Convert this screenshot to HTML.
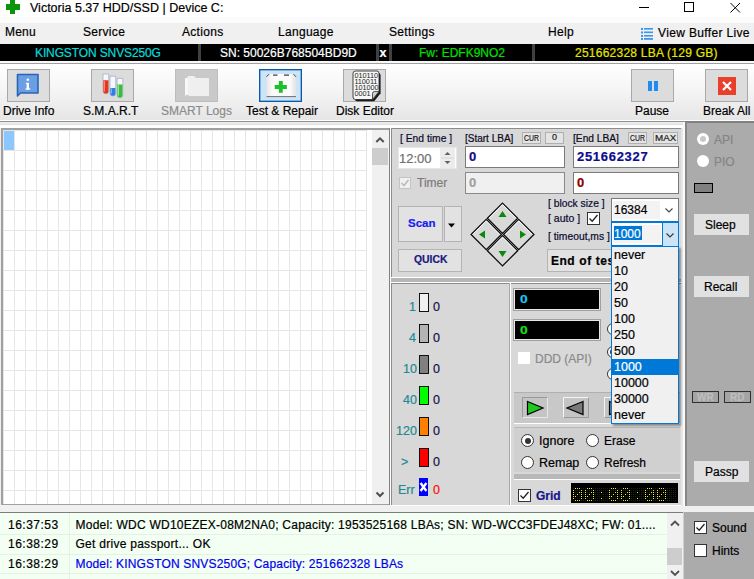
<!DOCTYPE html>
<html><head><meta charset="utf-8">
<style>
*{margin:0;padding:0;box-sizing:border-box}
html,body{width:754px;height:579px;overflow:hidden}
body{position:relative;background:#f0f0f0;font-family:"Liberation Sans",sans-serif;font-size:12px;color:#000}
.a{position:absolute}
.t{position:absolute;white-space:nowrap;line-height:12px;font-size:12px;-webkit-text-stroke:0.2px currentColor}
</style></head><body>

<!-- title bar -->
<div class="a" style="left:0;top:0;width:754px;height:22px;background:#fff"></div>
<div class="a" style="left:10px;top:0;width:5px;height:14px;background:#0a960a"></div>
<div class="a" style="left:6px;top:4px;width:14px;height:6px;background:#0a960a"></div>
<div class="t" style="left:30px;top:2px;font-size:12.5px;line-height:12.5px;color:#000">Victoria 5.37 HDD/SSD | Device C:</div>
<div class="a" style="left:639px;top:7px;width:10px;height:1px;background:#000"></div>
<div class="a" style="left:684px;top:2px;width:10px;height:10px;border:1px solid #000"></div>
<svg class="a" style="left:730px;top:2px" width="11" height="11"><path d="M0.5 1L10 10.5M10 1L0.5 10.5" stroke="#000" stroke-width="1"/></svg>

<!-- menu bar -->
<div class="a" style="left:0;top:17px;width:754px;height:6px;background:#fbfbfb"></div>
<div class="a" style="left:0;top:23px;width:754px;height:21px;background:#f0f0f0"></div>
<div class="t" style="left:5px;top:26px;letter-spacing:0.2px">Menu</div>
<div class="t" style="left:83px;top:26px;letter-spacing:0.3px">Service</div>
<div class="t" style="left:182px;top:26px;letter-spacing:0.3px">Actions</div>
<div class="t" style="left:278px;top:26px;letter-spacing:0.3px">Language</div>
<div class="t" style="left:389px;top:26px;letter-spacing:0.3px">Settings</div>
<div class="t" style="left:548px;top:26px;letter-spacing:0.3px">Help</div>
<svg class="a" style="left:640px;top:27px" width="14" height="14"><g fill="#3a96ee"><rect x="1" y="1" width="2" height="2"/><rect x="1" y="4.5" width="2" height="2"/><rect x="1" y="8" width="2" height="2"/><rect x="1" y="11" width="2" height="2"/><rect x="4" y="1" width="9" height="1.6"/><rect x="4" y="4.5" width="9" height="1.6"/><rect x="4" y="8" width="9" height="1.6"/><rect x="4" y="11" width="9" height="1.8"/></g></svg>
<div class="t" style="left:658px;top:27px;letter-spacing:0.35px">View Buffer Live</div>

<!-- drive bar -->
<div class="a" style="left:0;top:44px;width:754px;height:17px;background:#000"></div>
<div class="a" style="left:198px;top:44px;width:3px;height:17px;background:#404040"></div>
<div class="a" style="left:376px;top:44px;width:3px;height:17px;background:#404040"></div>
<div class="a" style="left:389px;top:44px;width:3px;height:17px;background:#404040"></div>
<div class="a" style="left:532px;top:44px;width:3px;height:17px;background:#404040"></div>
<div class="t" style="left:379.5px;top:47px;color:#fff;font-weight:bold;font-size:12.5px;line-height:12px">x</div>
<div class="t" style="left:35px;top:47px;color:#00dcdc;letter-spacing:-0.12px">KINGSTON SNVS250G</div>
<div class="t" style="left:220px;top:47px;color:#fff">SN: 50026B768504BD9D</div>
<div class="t" style="left:419px;top:47px;color:#00e000">Fw: EDFK9NO2</div>
<div class="t" style="left:575px;top:47px;color:#e6e600;letter-spacing:0.24px">251662328 LBA (129 GB)</div>

<!-- toolbar -->
<div class="a" style="left:0;top:61px;width:754px;height:2px;background:#f8f8f8"></div>
<div class="a" style="left:0;top:63px;width:754px;height:1px;background:#a0a0a0"></div>
<div class="a" style="left:0;top:64px;width:754px;height:56px;background:linear-gradient(#ffffff,#f4f4f4 50%,#e6e6e6)"></div>
<div class="a" style="left:0;top:120px;width:754px;height:1px;background:#fff"></div>
<div class="a" style="left:0;top:121px;width:754px;height:1px;background:#909090"></div>
<div class="a" style="left:0;top:122px;width:754px;height:2px;background:#ececec"></div>
<div class="a" style="left:0;top:124px;width:754px;height:1px;background:#e0e0e0"></div>
<div class="a" style="left:0;top:125px;width:754px;height:3px;background:#fff"></div>
<!-- buttons -->
<div class="a" style="left:7px;top:69px;width:43px;height:33px;background:#dedede;border:1px solid #a9a9a9"></div>
<svg class="a" style="left:16px;top:73px" width="24" height="25" viewBox="0 0 24 25">
<path d="M1.5 1.5H22V20H4.5L1.5 23Z" fill="#6b9fe4" stroke="#2c64b4" stroke-width="1.6" stroke-linejoin="round"/>
<rect x="10.6" y="9.8" width="2.4" height="6.4" fill="#fff"/><rect x="9.6" y="15.4" width="4.6" height="1.3" fill="#fff"/><rect x="9.8" y="9.8" width="1.2" height="1" fill="#fff"/>
<circle cx="11.8" cy="6.8" r="1.3" fill="#fff"/>
</svg>
<div class="a" style="left:91px;top:69px;width:43px;height:33px;background:#dcdcdc;border:1px solid #a9a9a9"></div>
<svg class="a" style="left:101px;top:73px" width="24" height="26" viewBox="0 0 24 26">
<path d="M2 1H7.7V18A2.85 2.85 0 0 1 2 18Z" fill="#f4f8ff" stroke="#a0a8b8" stroke-width="0.7"/>
<path d="M2.3 7.2H7.4V18A2.55 2.55 0 0 1 2.3 18Z" fill="#e8341e"/>
<path d="M3.4 8V18.5" stroke="#f6a090" stroke-width="0.9"/>
<path d="M9 3.2H14.7V20.2A2.85 2.85 0 0 1 9 20.2Z" fill="#f4f8ff" stroke="#a0a8b8" stroke-width="0.7"/>
<path d="M9.3 14.9H14.4V20.2A2.55 2.55 0 0 1 9.3 20.2Z" fill="#2a80e4"/>
<path d="M10.4 15.5V20.5" stroke="#90c0f4" stroke-width="0.9"/>
<path d="M16.1 5.4H21.8V22A2.85 2.85 0 0 1 16.1 22Z" fill="#f4f8ff" stroke="#a0a8b8" stroke-width="0.7"/>
<path d="M16.4 11.6H21.5V22A2.55 2.55 0 0 1 16.4 22Z" fill="#34c03c"/>
<path d="M17.5 12.2V22.5" stroke="#a0e8a4" stroke-width="0.9"/>
</svg>
<div class="a" style="left:175px;top:69px;width:43px;height:33px;background:#c9c9c9;border:1px solid #bdbdbd"></div>
<svg class="a" style="left:184px;top:75px" width="26" height="22" viewBox="0 0 26 22">
<path d="M4 1H10L12 3H25V21H5L3 19V3Z" fill="#efefef"/>
<path d="M1 3H4V19L1 21Z" fill="#f7f7f7"/>
</svg>
<div class="a" style="left:259px;top:69px;width:43px;height:33px;background:#cce4f7;border:1px solid #0a58a8;box-shadow:inset 0 0 0 0.5px #3a80c8"></div>
<svg class="a" style="left:262px;top:70px" width="38" height="30" viewBox="0 0 38 30">
<defs><linearGradient id="fa" x1="0" x2="1"><stop offset="0" stop-color="#e6e6e6"/><stop offset="0.2" stop-color="#fbfbfb"/><stop offset="0.8" stop-color="#fbfbfb"/><stop offset="1" stop-color="#e2e2e2"/></linearGradient></defs>
<path d="M4.5 6.5L7 4H31.5L34 6.5V27H4.5Z" fill="url(#fa)"/>
<path d="M4.5 6.8L7 4.2M31.5 4.2L34 6.8" stroke="#404040" stroke-width="1"/>
<path d="M11 5.2H15.5M22 5.2H27" stroke="#404040" stroke-width="1.3"/>
<path d="M4.5 26.6H34" stroke="#707070" stroke-width="1"/>
<path d="M18.8 11V22.8M12.7 17H24.9" stroke="#1cc02a" stroke-width="3.9"/>
</svg>
<div class="a" style="left:343px;top:69px;width:43px;height:33px;background:#dcdcdc;border:1px solid #a9a9a9"></div>
<svg class="a" style="left:351px;top:70px" width="32" height="32" viewBox="0 0 32 32">
<path d="M4 5Q4 3 6 3H27Q29.6 3 29.6 5.5V23.2L23.2 31.2H6Q4 31.2 4 29Z" fill="#1a1a1a"/>
<path d="M2 3.5Q2 1 4.5 1H26Q28 1 28 3.5V21.5L21.5 29.5H4.5Q2 29.5 2 27Z" fill="#f6f6f6" stroke="#303030" stroke-width="0.9"/>
<path d="M28 21.5L21.5 29.5V23.5Q21.5 21.5 23.5 21.5Z" fill="#d0d0d0" stroke="#303030" stroke-width="0.8"/>
<g font-family="Liberation Sans" font-size="7.3" fill="#1e1e1e" letter-spacing="-0.05">
<text x="3.4" y="7.6">010110</text>
<text x="3.4" y="13.8">110011</text>
<text x="3.4" y="20">101000</text>
<text x="3.4" y="26.2">0001</text>
</g>
</svg>
<div class="a" style="left:631px;top:69px;width:43px;height:33px;background:#dcdcdc;border:1px solid #a9a9a9"></div>
<div class="a" style="left:648px;top:81px;width:4px;height:10px;background:#1e8cf0"></div>
<div class="a" style="left:654px;top:81px;width:4px;height:10px;background:#1e8cf0"></div>
<div class="a" style="left:705px;top:69px;width:43px;height:33px;background:#dcdcdc;border:1px solid #a9a9a9"></div>
<div class="a" style="left:718px;top:77px;width:18px;height:18px;background:#e8402a"></div>
<svg class="a" style="left:718px;top:77px" width="18" height="18"><path d="M5 5L13 13M13 5L5 13" stroke="#fff" stroke-width="2.2"/></svg>
<div class="t" style="left:3px;top:105px">Drive Info</div>
<div class="t" style="left:83px;top:105px">S.M.A.R.T</div>
<div class="t" style="left:161px;top:105px;color:#8c8c8c">SMART Logs</div>
<div class="t" style="left:246px;top:105px">Test &amp; Repair</div>
<div class="t" style="left:336px;top:105px">Disk Editor</div>
<div class="t" style="left:635px;top:105px">Pause</div>
<div class="t" style="left:703px;top:105px">Break All</div>

<!-- grid area -->
<div class="a" style="left:1px;top:128px;width:389px;height:377px;background:#a0a0a0"></div>
<div class="a" style="left:3px;top:130px;width:386px;height:374px;background-color:#fff;background-image:linear-gradient(90deg,#e6e6e6 1px,transparent 1px),linear-gradient(#e6e6e6 1px,transparent 1px);background-size:11px 20px,11px 20px;background-position:11px 0,0 20px"></div>
<div class="a" style="left:4px;top:131px;width:10px;height:19px;background:#8cc8ff"></div>
<div class="a" style="left:367px;top:130px;width:5px;height:374px;background:#fff"></div>
<div class="a" style="left:372px;top:130px;width:17px;height:374px;background:#f0f0f0"></div>
<div class="a" style="left:372px;top:148px;width:16px;height:17px;background:#cdcdcd"></div>
<svg class="a" style="left:372px;top:131px" width="17" height="17"><path d="M4.3 11L8 7.3L11.7 11" fill="none" stroke="#505050" stroke-width="2"/></svg>
<svg class="a" style="left:372px;top:486px" width="17" height="17"><path d="M4.5 6.5L8 10L11.5 6.5" fill="none" stroke="#505050" stroke-width="2"/></svg>
<div class="a" style="left:389px;top:128px;width:1px;height:377px;background:#808080"></div>

<!-- top panel -->
<div class="a" style="left:390px;top:128px;width:1px;height:377px;background:#fff"></div>
<div class="a" style="left:391px;top:128px;width:290px;height:149px;background:#d8d8d8;border-left:1px solid #8c8c8c;border-top:1px solid #8c8c8c"></div>
<div class="a" style="left:681px;top:128px;width:2px;height:378px;background:#e6e6e6"></div>
<div class="a" style="left:683px;top:122px;width:2px;height:384px;background:#fafafa"></div>
<div class="a" style="left:685px;top:121px;width:2px;height:385px;background:#868686"></div>
<div class="a" style="left:391px;top:277px;width:290px;height:1px;background:#fff"></div>
<div class="a" style="left:391px;top:278px;width:290px;height:4px;background:#b6b6b6"></div>
<div class="a" style="left:391px;top:282px;width:290px;height:1px;background:#fff"></div>

<div class="t" style="left:400px;top:134px;font-size:10.3px;line-height:10px;color:#0a0a30">[ End time ]</div>
<div class="t" style="left:465px;top:134px;font-size:10px;line-height:10px;color:#0a0a20">[Start LBA]</div>
<div class="a" style="left:522px;top:132px;width:19px;height:12px;background:#e4e4e4;border:1px solid #b0b0b0"></div>
<div class="t" style="left:524px;top:134px;font-size:8.4px;line-height:8px;color:#202020;transform:scaleX(0.82);transform-origin:0 0">CUR</div>
<div class="a" style="left:545px;top:132px;width:19px;height:12px;background:#e4e4e4;border:1px solid #b0b0b0"></div>
<div class="t" style="left:552px;top:133px;font-size:9px;line-height:9px;color:#202020">0</div>
<div class="t" style="left:573px;top:134px;font-size:10.2px;line-height:10px;color:#0a0a20">[End LBA]</div>
<div class="a" style="left:628px;top:132px;width:19px;height:12px;background:#e4e4e4;border:1px solid #b0b0b0"></div>
<div class="t" style="left:630px;top:134px;font-size:8.4px;line-height:8px;color:#202020;transform:scaleX(0.82);transform-origin:0 0">CUR</div>
<div class="a" style="left:653px;top:132px;width:25px;height:12px;background:#e4e4e4;border:1px solid #b0b0b0"></div>
<div class="t" style="left:655px;top:133px;font-size:9.8px;line-height:9px;color:#202020">MAX</div>

<div class="a" style="left:398px;top:147px;width:59px;height:22px;background:#fff;border:1px solid #e6e6e6"></div>
<div class="t" style="left:399px;top:152px;font-size:13px;line-height:13px;color:#707070">12:00</div>
<div class="a" style="left:440px;top:148px;width:15px;height:20px;background:#ececec"></div>
<svg class="a" style="left:440px;top:148px" width="15" height="20"><path d="M4.5 7L7.5 4L10.5 7Z" fill="#606060"/><path d="M4.5 13L7.5 16L10.5 13Z" fill="#606060"/><path d="M1 10H14" stroke="#d4d4d4"/></svg>
<div class="a" style="left:399px;top:177px;width:12px;height:12px;background:#f0f0f0;border:1px solid #c4c4c4"></div>
<svg class="a" style="left:399px;top:177px" width="12" height="12"><path d="M2.5 6L5 8.5L9.5 3" fill="none" stroke="#b4b4b4" stroke-width="1.3"/></svg>
<div class="t" style="left:417px;top:177px;color:#7c7c7c">Timer</div>

<div class="a" style="left:465px;top:146px;width:100px;height:22px;background:#fff;border:1px solid #7a7a7a"></div>
<div class="t" style="left:469px;top:150px;font-size:13px;line-height:13px;font-weight:bold;color:#0c0c8c">0</div>
<div class="a" style="left:465px;top:172px;width:100px;height:22px;background:#f0f0f0;border:1px solid #8a8a8a"></div>
<div class="t" style="left:469px;top:176px;font-size:13px;line-height:13px;font-weight:bold;color:#a0a0a0">0</div>
<div class="a" style="left:573px;top:146px;width:106px;height:22px;background:#fff;border:1px solid #7a7a7a"></div>
<div class="t" style="left:577px;top:150px;font-size:13px;line-height:13px;font-weight:bold;color:#0c0c8c;letter-spacing:0.7px">251662327</div>
<div class="a" style="left:573px;top:172px;width:106px;height:22px;background:#fff;border:1px solid #7a7a7a"></div>
<div class="t" style="left:577px;top:176px;font-size:13px;line-height:13px;font-weight:bold;color:#8c0000">0</div>

<div class="a" style="left:398px;top:206px;width:45px;height:36px;background:#e2e2e2;border:1px solid #b4b4b4"></div>
<div class="t" style="left:408px;top:218px;font-size:11.5px;line-height:11px;font-weight:bold;color:#1c1cf0">Scan</div>
<div class="a" style="left:444px;top:206px;width:18px;height:36px;background:#e2e2e2;border:1px solid #b4b4b4"></div>
<svg class="a" style="left:444px;top:206px" width="18" height="36"><path d="M4 17.5H11L7.5 21.5Z" fill="#000"/></svg>
<div class="a" style="left:398px;top:249px;width:64px;height:23px;background:#e2e2e2;border:1px solid #b4b4b4"></div>
<div class="t" style="left:414px;top:255px;font-size:10.4px;line-height:10px;font-weight:bold;color:#1a1a80">QUICK</div>

<svg class="a" style="left:468px;top:200px" width="70" height="70" viewBox="0 0 70 70">
<g stroke="#0c0c0c" stroke-width="1.3" fill="#d9d9d9"><path d="M34.50 3.10L49.65 18.25L34.50 33.40L19.35 18.25Z"/><path d="M18.25 19.35L33.40 34.50L18.25 49.65L3.10 34.50Z"/><path d="M50.75 19.35L65.90 34.50L50.75 49.65L35.60 34.50Z"/><path d="M34.50 35.60L49.65 50.75L34.50 65.90L19.35 50.75Z"/></g>
<g stroke="#fafafa" stroke-width="1" fill="none"><path d="M20.95 18.25L34.50 4.70L48.05 18.25" /><path d="M4.70 34.50L18.25 20.95L31.80 34.50" /><path d="M37.20 34.50L50.75 20.95L64.30 34.50" /><path d="M20.95 50.75L34.50 37.20L48.05 50.75" /></g>
<path d="M30.5 17L34.5 11L38.5 17Z" fill="#0a8a0a"/>
<path d="M30.5 51L34.5 57L38.5 51Z" fill="#0a8a0a"/>
<path d="M17 30.5L11 34.5L17 38.5Z" fill="#0a8a0a"/>
<path d="M52 30.5L58 34.5L52 38.5Z" fill="#0a8a0a"/>
</svg>

<div class="t" style="left:548px;top:199px;font-size:10.3px;line-height:10px;color:#0a0a30">[ block size ]</div>
<div class="t" style="left:548px;top:213px;font-size:10.5px;line-height:10px;color:#0a0a30">[ auto ]</div>
<div class="a" style="left:587px;top:212px;width:13px;height:13px;background:#fff;border:1px solid #333"></div>
<svg class="a" style="left:587px;top:212px" width="13" height="13"><path d="M2.5 6.5L5.2 9.2L10.5 3" fill="none" stroke="#222" stroke-width="1.3"/></svg>
<div class="t" style="left:548px;top:232px;font-size:10.3px;line-height:10px;color:#0a0a30">[ timeout,ms ]</div>

<div class="a" style="left:547px;top:249px;width:80px;height:23px;background:#e2e2e2;border:1px solid #b4b4b4"></div>
<div class="t" style="left:551px;top:255px;font-size:12px;line-height:12px;font-weight:bold;color:#000;letter-spacing:0.5px;word-spacing:0.3px">End of test</div>

<div class="a" style="left:611px;top:198px;width:68px;height:24px;background:#fff;border:1px solid #7a7a7a"></div>
<div class="a" style="left:613px;top:201px;width:47px;height:18px;background:#f3f3f3"></div>
<div class="t" style="left:614px;top:204px;color:#000">16384</div>
<svg class="a" style="left:662px;top:204px" width="14" height="12"><path d="M3.5 4.5L7 8L10.5 4.5" fill="none" stroke="#444" stroke-width="1.1"/></svg>

<div class="a" style="left:611px;top:221px;width:68px;height:26px;background:#fff;border:1px solid #0078d7;border-top-width:2px;border-bottom-width:2px"></div>
<div class="a" style="left:662px;top:223px;width:16px;height:23px;background:#cce4f7;border-left:1px solid #0078d7"></div>
<svg class="a" style="left:663px;top:229px" width="14" height="12"><path d="M3.5 4.5L7 8L10.5 4.5" fill="none" stroke="#333" stroke-width="1.1"/></svg>
<div class="a" style="left:613px;top:225px;width:48px;height:18px;background:#f3f3f3"></div>
<div class="a" style="left:614px;top:226px;width:28px;height:14px;background:#0078d7"></div>
<div class="t" style="left:614px;top:228px;color:#fff">1000</div>

<!-- lower left stats panel -->
<div class="a" style="left:391px;top:283px;width:119px;height:222px;background:#d8d8d8;border-left:1px solid #8c8c8c;border-top:1px solid #8c8c8c"></div>
<div class="a" style="left:509px;top:283px;width:1px;height:222px;background:#a8a8a8"></div>
<div class="a" style="left:510px;top:283px;width:1px;height:222px;background:#fff"></div>
<div class="t" style="left:409px;top:301px;font-size:12.5px;line-height:12px;color:#1d8a96">1</div>
<div class="t" style="left:409px;top:332px;font-size:12.5px;line-height:12px;color:#1d8a96">4</div>
<div class="t" style="left:403px;top:363px;font-size:12.5px;line-height:12px;color:#1d8a96">10</div>
<div class="t" style="left:403px;top:394px;font-size:12.5px;line-height:12px;color:#1d8a96">40</div>
<div class="t" style="left:396px;top:425px;font-size:12.5px;line-height:12px;color:#1d8a96">120</div>
<div class="t" style="left:401px;top:456px;font-size:12.5px;line-height:12px;color:#1d8a96">&gt;</div>
<div class="t" style="left:398px;top:484px;font-size:12.5px;line-height:12px;color:#1d8a96">Err</div>
<div class="a" style="left:419px;top:293px;width:10px;height:19px;background:#f0f0f0;border:1.5px solid #111"></div>
<div class="a" style="left:419px;top:324px;width:10px;height:19px;background:#b4b4b4;border:1.5px solid #111"></div>
<div class="a" style="left:419px;top:355px;width:10px;height:19px;background:#808080;border:1.5px solid #111"></div>
<div class="a" style="left:419px;top:386px;width:10px;height:19px;background:#00ff00;border:1.5px solid #111"></div>
<div class="a" style="left:419px;top:417px;width:10px;height:19px;background:#ff8000;border:1.5px solid #111"></div>
<div class="a" style="left:419px;top:448px;width:10px;height:19px;background:#ff0000;border:1.5px solid #111"></div>
<div class="a" style="left:419px;top:478px;width:9px;height:18px;background:#0000ff"></div>
<svg class="a" style="left:419px;top:478px" width="9" height="18"><path d="M1.6 5L7.4 13M7.4 5L1.6 13" stroke="#fff" stroke-width="2.3"/></svg>
<div class="t" style="left:433px;top:301px;font-size:12.5px;line-height:12px;color:#14144a">0</div>
<div class="t" style="left:433px;top:332px;font-size:12.5px;line-height:12px;color:#14144a">0</div>
<div class="t" style="left:433px;top:363px;font-size:12.5px;line-height:12px;color:#14144a">0</div>
<div class="t" style="left:433px;top:394px;font-size:12.5px;line-height:12px;color:#14144a">0</div>
<div class="t" style="left:433px;top:425px;font-size:12.5px;line-height:12px;color:#14144a">0</div>
<div class="t" style="left:433px;top:456px;font-size:12.5px;line-height:12px;color:#14144a">0</div>
<div class="t" style="left:433px;top:484px;font-size:12.5px;line-height:12px;color:#ff1010">0</div>

<!-- lower right panel -->
<div class="a" style="left:511px;top:283px;width:170px;height:222px;background:#d8d8d8;border-top:1px solid #8c8c8c"></div>
<div class="a" style="left:514px;top:289px;width:86px;height:21px;background:#000;border:1px solid #e8e8e8;outline:1px solid #a0a0a0"></div>
<div class="t" style="left:520px;top:294px;font-size:11px;line-height:11px;font-weight:bold;color:#18c8f4;transform:scaleX(1.25);transform-origin:0 0">0</div>
<div class="a" style="left:514px;top:320px;width:86px;height:20px;background:#000;border:1px solid #e8e8e8;outline:1px solid #a0a0a0"></div>
<div class="t" style="left:520px;top:325px;font-size:11px;line-height:11px;font-weight:bold;color:#18e018;transform:scaleX(1.25);transform-origin:0 0">0</div>
<div class="a" style="left:518px;top:352px;width:12px;height:12px;background:#fff"></div>
<div class="t" style="left:535px;top:353px;color:#8a8a8a">DDD (API)</div>
<div class="a" style="left:607px;top:323px;width:12px;height:12px;border-radius:50%;background:#fff;border:1px solid #333"></div>
<div class="a" style="left:607px;top:346px;width:12px;height:12px;border-radius:50%;background:#fff;border:1px solid #333"></div>
<div class="a" style="left:610px;top:349px;width:6px;height:6px;border-radius:50%;background:#333"></div>
<div class="a" style="left:607px;top:368px;width:12px;height:12px;border-radius:50%;background:#fff;border:1px solid #333"></div>

<div class="a" style="left:514px;top:392px;width:166px;height:31px;background:#c8c8c8;border-top:1px solid #b0b0b0"></div>
<div class="a" style="left:514px;top:423px;width:166px;height:1px;background:#fff"></div>
<div class="a" style="left:522px;top:397px;width:26px;height:21px;background:#c4c4c4;border:1px solid #e8e8e8;border-top-color:#9a9a9a;border-left-color:#9a9a9a"></div>
<svg class="a" style="left:522px;top:397px" width="26" height="21"><path d="M5.5 4.5L21 11L5.5 17.5Z" fill="#22c822" stroke="#000" stroke-width="1.2"/></svg>
<div class="a" style="left:563px;top:397px;width:26px;height:21px;background:#c4c4c4;border:1px solid #9a9a9a;border-top-color:#f4f4f4;border-left-color:#f4f4f4"></div>
<svg class="a" style="left:563px;top:397px" width="26" height="21"><path d="M20 4.5L4 11L20 17.5Z" fill="#7a7a7a" stroke="#000" stroke-width="1.2"/></svg>
<div class="a" style="left:604px;top:397px;width:26px;height:21px;background:#c4c4c4;border:1px solid #9a9a9a;border-top-color:#f4f4f4;border-left-color:#f4f4f4"></div>
<svg class="a" style="left:604px;top:397px" width="26" height="21"><path d="M5.5 4.5L21 11L5.5 17.5Z" fill="#7a7a7a" stroke="#000" stroke-width="1.2"/></svg>

<div class="a" style="left:514px;top:427px;width:166px;height:45px;background:#d0d0d0;border-top:1px solid #b8b8b8"></div>
<div class="a" style="left:521px;top:434px;width:13px;height:13px;border-radius:50%;background:#fff;border:1.3px solid #333"></div>
<div class="a" style="left:524.5px;top:437.5px;width:6px;height:6px;border-radius:50%;background:#333"></div>
<div class="t" style="left:539px;top:435px;font-size:12.5px;line-height:12px">Ignore</div>
<div class="a" style="left:586px;top:434px;width:13px;height:13px;border-radius:50%;background:#fff;border:1px solid #333"></div>
<div class="t" style="left:604px;top:435px">Erase</div>
<div class="a" style="left:521px;top:456px;width:13px;height:13px;border-radius:50%;background:#fff;border:1px solid #333"></div>
<div class="t" style="left:539px;top:457px;font-size:12.5px;line-height:12px">Remap</div>
<div class="a" style="left:586px;top:456px;width:13px;height:13px;border-radius:50%;background:#fff;border:1px solid #333"></div>
<div class="t" style="left:604px;top:457px">Refresh</div>
<div class="a" style="left:514px;top:474px;width:166px;height:5px;background:#b8b8b8"></div>
<div class="a" style="left:514px;top:479px;width:166px;height:1px;background:#fff"></div>

<div class="a" style="left:518px;top:489px;width:13px;height:13px;background:#fff;border:1px solid #333"></div>
<svg class="a" style="left:518px;top:489px" width="13" height="13"><path d="M2.5 6.5L5.2 9.2L10.5 3" fill="none" stroke="#222" stroke-width="1.3"/></svg>
<div class="t" style="left:536px;top:490px;font-weight:bold;color:#14148c">Grid</div>
<svg class="a" style="left:571px;top:483px" width="107" height="20"><rect width="107" height="20" fill="#000"/><g fill="#1a2a10" opacity="0.9"><rect x="2" y="5" width="1" height="1"/><rect x="2" y="7" width="1" height="1"/><rect x="2" y="9" width="1" height="1"/><rect x="2" y="11" width="1" height="1"/><rect x="2" y="13" width="1" height="1"/><rect x="2" y="15" width="1" height="1"/><rect x="2" y="17" width="1" height="1"/><rect x="4" y="5" width="1" height="1"/><rect x="4" y="7" width="1" height="1"/><rect x="4" y="9" width="1" height="1"/><rect x="4" y="11" width="1" height="1"/><rect x="4" y="13" width="1" height="1"/><rect x="4" y="15" width="1" height="1"/><rect x="4" y="17" width="1" height="1"/><rect x="6" y="5" width="1" height="1"/><rect x="6" y="7" width="1" height="1"/><rect x="6" y="9" width="1" height="1"/><rect x="6" y="11" width="1" height="1"/><rect x="6" y="13" width="1" height="1"/><rect x="6" y="15" width="1" height="1"/><rect x="6" y="17" width="1" height="1"/><rect x="8" y="5" width="1" height="1"/><rect x="8" y="7" width="1" height="1"/><rect x="8" y="9" width="1" height="1"/><rect x="8" y="11" width="1" height="1"/><rect x="8" y="13" width="1" height="1"/><rect x="8" y="15" width="1" height="1"/><rect x="8" y="17" width="1" height="1"/><rect x="10" y="5" width="1" height="1"/><rect x="10" y="7" width="1" height="1"/><rect x="10" y="9" width="1" height="1"/><rect x="10" y="11" width="1" height="1"/><rect x="10" y="13" width="1" height="1"/><rect x="10" y="15" width="1" height="1"/><rect x="10" y="17" width="1" height="1"/><rect x="12" y="5" width="1" height="1"/><rect x="12" y="7" width="1" height="1"/><rect x="12" y="9" width="1" height="1"/><rect x="12" y="11" width="1" height="1"/><rect x="12" y="13" width="1" height="1"/><rect x="12" y="15" width="1" height="1"/><rect x="12" y="17" width="1" height="1"/><rect x="14" y="5" width="1" height="1"/><rect x="14" y="7" width="1" height="1"/><rect x="14" y="9" width="1" height="1"/><rect x="14" y="11" width="1" height="1"/><rect x="14" y="13" width="1" height="1"/><rect x="14" y="15" width="1" height="1"/><rect x="14" y="17" width="1" height="1"/><rect x="16" y="5" width="1" height="1"/><rect x="16" y="7" width="1" height="1"/><rect x="16" y="9" width="1" height="1"/><rect x="16" y="11" width="1" height="1"/><rect x="16" y="13" width="1" height="1"/><rect x="16" y="15" width="1" height="1"/><rect x="16" y="17" width="1" height="1"/><rect x="18" y="5" width="1" height="1"/><rect x="18" y="7" width="1" height="1"/><rect x="18" y="9" width="1" height="1"/><rect x="18" y="11" width="1" height="1"/><rect x="18" y="13" width="1" height="1"/><rect x="18" y="15" width="1" height="1"/><rect x="18" y="17" width="1" height="1"/><rect x="20" y="5" width="1" height="1"/><rect x="20" y="7" width="1" height="1"/><rect x="20" y="9" width="1" height="1"/><rect x="20" y="11" width="1" height="1"/><rect x="20" y="13" width="1" height="1"/><rect x="20" y="15" width="1" height="1"/><rect x="20" y="17" width="1" height="1"/><rect x="22" y="5" width="1" height="1"/><rect x="22" y="7" width="1" height="1"/><rect x="22" y="9" width="1" height="1"/><rect x="22" y="11" width="1" height="1"/><rect x="22" y="13" width="1" height="1"/><rect x="22" y="15" width="1" height="1"/><rect x="22" y="17" width="1" height="1"/><rect x="24" y="5" width="1" height="1"/><rect x="24" y="7" width="1" height="1"/><rect x="24" y="9" width="1" height="1"/><rect x="24" y="11" width="1" height="1"/><rect x="24" y="13" width="1" height="1"/><rect x="24" y="15" width="1" height="1"/><rect x="24" y="17" width="1" height="1"/><rect x="26" y="5" width="1" height="1"/><rect x="26" y="7" width="1" height="1"/><rect x="26" y="9" width="1" height="1"/><rect x="26" y="11" width="1" height="1"/><rect x="26" y="13" width="1" height="1"/><rect x="26" y="15" width="1" height="1"/><rect x="26" y="17" width="1" height="1"/><rect x="28" y="5" width="1" height="1"/><rect x="28" y="7" width="1" height="1"/><rect x="28" y="9" width="1" height="1"/><rect x="28" y="11" width="1" height="1"/><rect x="28" y="13" width="1" height="1"/><rect x="28" y="15" width="1" height="1"/><rect x="28" y="17" width="1" height="1"/><rect x="30" y="5" width="1" height="1"/><rect x="30" y="7" width="1" height="1"/><rect x="30" y="9" width="1" height="1"/><rect x="30" y="11" width="1" height="1"/><rect x="30" y="13" width="1" height="1"/><rect x="30" y="15" width="1" height="1"/><rect x="30" y="17" width="1" height="1"/><rect x="32" y="5" width="1" height="1"/><rect x="32" y="7" width="1" height="1"/><rect x="32" y="9" width="1" height="1"/><rect x="32" y="11" width="1" height="1"/><rect x="32" y="13" width="1" height="1"/><rect x="32" y="15" width="1" height="1"/><rect x="32" y="17" width="1" height="1"/><rect x="34" y="5" width="1" height="1"/><rect x="34" y="7" width="1" height="1"/><rect x="34" y="9" width="1" height="1"/><rect x="34" y="11" width="1" height="1"/><rect x="34" y="13" width="1" height="1"/><rect x="34" y="15" width="1" height="1"/><rect x="34" y="17" width="1" height="1"/><rect x="36" y="5" width="1" height="1"/><rect x="36" y="7" width="1" height="1"/><rect x="36" y="9" width="1" height="1"/><rect x="36" y="11" width="1" height="1"/><rect x="36" y="13" width="1" height="1"/><rect x="36" y="15" width="1" height="1"/><rect x="36" y="17" width="1" height="1"/><rect x="38" y="5" width="1" height="1"/><rect x="38" y="7" width="1" height="1"/><rect x="38" y="9" width="1" height="1"/><rect x="38" y="11" width="1" height="1"/><rect x="38" y="13" width="1" height="1"/><rect x="38" y="15" width="1" height="1"/><rect x="38" y="17" width="1" height="1"/><rect x="40" y="5" width="1" height="1"/><rect x="40" y="7" width="1" height="1"/><rect x="40" y="9" width="1" height="1"/><rect x="40" y="11" width="1" height="1"/><rect x="40" y="13" width="1" height="1"/><rect x="40" y="15" width="1" height="1"/><rect x="40" y="17" width="1" height="1"/><rect x="42" y="5" width="1" height="1"/><rect x="42" y="7" width="1" height="1"/><rect x="42" y="9" width="1" height="1"/><rect x="42" y="11" width="1" height="1"/><rect x="42" y="13" width="1" height="1"/><rect x="42" y="15" width="1" height="1"/><rect x="42" y="17" width="1" height="1"/><rect x="44" y="5" width="1" height="1"/><rect x="44" y="7" width="1" height="1"/><rect x="44" y="9" width="1" height="1"/><rect x="44" y="11" width="1" height="1"/><rect x="44" y="13" width="1" height="1"/><rect x="44" y="15" width="1" height="1"/><rect x="44" y="17" width="1" height="1"/><rect x="46" y="5" width="1" height="1"/><rect x="46" y="7" width="1" height="1"/><rect x="46" y="9" width="1" height="1"/><rect x="46" y="11" width="1" height="1"/><rect x="46" y="13" width="1" height="1"/><rect x="46" y="15" width="1" height="1"/><rect x="46" y="17" width="1" height="1"/><rect x="48" y="5" width="1" height="1"/><rect x="48" y="7" width="1" height="1"/><rect x="48" y="9" width="1" height="1"/><rect x="48" y="11" width="1" height="1"/><rect x="48" y="13" width="1" height="1"/><rect x="48" y="15" width="1" height="1"/><rect x="48" y="17" width="1" height="1"/><rect x="50" y="5" width="1" height="1"/><rect x="50" y="7" width="1" height="1"/><rect x="50" y="9" width="1" height="1"/><rect x="50" y="11" width="1" height="1"/><rect x="50" y="13" width="1" height="1"/><rect x="50" y="15" width="1" height="1"/><rect x="50" y="17" width="1" height="1"/><rect x="52" y="5" width="1" height="1"/><rect x="52" y="7" width="1" height="1"/><rect x="52" y="9" width="1" height="1"/><rect x="52" y="11" width="1" height="1"/><rect x="52" y="13" width="1" height="1"/><rect x="52" y="15" width="1" height="1"/><rect x="52" y="17" width="1" height="1"/><rect x="54" y="5" width="1" height="1"/><rect x="54" y="7" width="1" height="1"/><rect x="54" y="9" width="1" height="1"/><rect x="54" y="11" width="1" height="1"/><rect x="54" y="13" width="1" height="1"/><rect x="54" y="15" width="1" height="1"/><rect x="54" y="17" width="1" height="1"/><rect x="56" y="5" width="1" height="1"/><rect x="56" y="7" width="1" height="1"/><rect x="56" y="9" width="1" height="1"/><rect x="56" y="11" width="1" height="1"/><rect x="56" y="13" width="1" height="1"/><rect x="56" y="15" width="1" height="1"/><rect x="56" y="17" width="1" height="1"/><rect x="58" y="5" width="1" height="1"/><rect x="58" y="7" width="1" height="1"/><rect x="58" y="9" width="1" height="1"/><rect x="58" y="11" width="1" height="1"/><rect x="58" y="13" width="1" height="1"/><rect x="58" y="15" width="1" height="1"/><rect x="58" y="17" width="1" height="1"/><rect x="60" y="5" width="1" height="1"/><rect x="60" y="7" width="1" height="1"/><rect x="60" y="9" width="1" height="1"/><rect x="60" y="11" width="1" height="1"/><rect x="60" y="13" width="1" height="1"/><rect x="60" y="15" width="1" height="1"/><rect x="60" y="17" width="1" height="1"/><rect x="62" y="5" width="1" height="1"/><rect x="62" y="7" width="1" height="1"/><rect x="62" y="9" width="1" height="1"/><rect x="62" y="11" width="1" height="1"/><rect x="62" y="13" width="1" height="1"/><rect x="62" y="15" width="1" height="1"/><rect x="62" y="17" width="1" height="1"/><rect x="64" y="5" width="1" height="1"/><rect x="64" y="7" width="1" height="1"/><rect x="64" y="9" width="1" height="1"/><rect x="64" y="11" width="1" height="1"/><rect x="64" y="13" width="1" height="1"/><rect x="64" y="15" width="1" height="1"/><rect x="64" y="17" width="1" height="1"/><rect x="66" y="5" width="1" height="1"/><rect x="66" y="7" width="1" height="1"/><rect x="66" y="9" width="1" height="1"/><rect x="66" y="11" width="1" height="1"/><rect x="66" y="13" width="1" height="1"/><rect x="66" y="15" width="1" height="1"/><rect x="66" y="17" width="1" height="1"/><rect x="68" y="5" width="1" height="1"/><rect x="68" y="7" width="1" height="1"/><rect x="68" y="9" width="1" height="1"/><rect x="68" y="11" width="1" height="1"/><rect x="68" y="13" width="1" height="1"/><rect x="68" y="15" width="1" height="1"/><rect x="68" y="17" width="1" height="1"/><rect x="70" y="5" width="1" height="1"/><rect x="70" y="7" width="1" height="1"/><rect x="70" y="9" width="1" height="1"/><rect x="70" y="11" width="1" height="1"/><rect x="70" y="13" width="1" height="1"/><rect x="70" y="15" width="1" height="1"/><rect x="70" y="17" width="1" height="1"/><rect x="72" y="5" width="1" height="1"/><rect x="72" y="7" width="1" height="1"/><rect x="72" y="9" width="1" height="1"/><rect x="72" y="11" width="1" height="1"/><rect x="72" y="13" width="1" height="1"/><rect x="72" y="15" width="1" height="1"/><rect x="72" y="17" width="1" height="1"/><rect x="74" y="5" width="1" height="1"/><rect x="74" y="7" width="1" height="1"/><rect x="74" y="9" width="1" height="1"/><rect x="74" y="11" width="1" height="1"/><rect x="74" y="13" width="1" height="1"/><rect x="74" y="15" width="1" height="1"/><rect x="74" y="17" width="1" height="1"/><rect x="76" y="5" width="1" height="1"/><rect x="76" y="7" width="1" height="1"/><rect x="76" y="9" width="1" height="1"/><rect x="76" y="11" width="1" height="1"/><rect x="76" y="13" width="1" height="1"/><rect x="76" y="15" width="1" height="1"/><rect x="76" y="17" width="1" height="1"/><rect x="78" y="5" width="1" height="1"/><rect x="78" y="7" width="1" height="1"/><rect x="78" y="9" width="1" height="1"/><rect x="78" y="11" width="1" height="1"/><rect x="78" y="13" width="1" height="1"/><rect x="78" y="15" width="1" height="1"/><rect x="78" y="17" width="1" height="1"/><rect x="80" y="5" width="1" height="1"/><rect x="80" y="7" width="1" height="1"/><rect x="80" y="9" width="1" height="1"/><rect x="80" y="11" width="1" height="1"/><rect x="80" y="13" width="1" height="1"/><rect x="80" y="15" width="1" height="1"/><rect x="80" y="17" width="1" height="1"/><rect x="82" y="5" width="1" height="1"/><rect x="82" y="7" width="1" height="1"/><rect x="82" y="9" width="1" height="1"/><rect x="82" y="11" width="1" height="1"/><rect x="82" y="13" width="1" height="1"/><rect x="82" y="15" width="1" height="1"/><rect x="82" y="17" width="1" height="1"/><rect x="84" y="5" width="1" height="1"/><rect x="84" y="7" width="1" height="1"/><rect x="84" y="9" width="1" height="1"/><rect x="84" y="11" width="1" height="1"/><rect x="84" y="13" width="1" height="1"/><rect x="84" y="15" width="1" height="1"/><rect x="84" y="17" width="1" height="1"/><rect x="86" y="5" width="1" height="1"/><rect x="86" y="7" width="1" height="1"/><rect x="86" y="9" width="1" height="1"/><rect x="86" y="11" width="1" height="1"/><rect x="86" y="13" width="1" height="1"/><rect x="86" y="15" width="1" height="1"/><rect x="86" y="17" width="1" height="1"/><rect x="88" y="5" width="1" height="1"/><rect x="88" y="7" width="1" height="1"/><rect x="88" y="9" width="1" height="1"/><rect x="88" y="11" width="1" height="1"/><rect x="88" y="13" width="1" height="1"/><rect x="88" y="15" width="1" height="1"/><rect x="88" y="17" width="1" height="1"/><rect x="90" y="5" width="1" height="1"/><rect x="90" y="7" width="1" height="1"/><rect x="90" y="9" width="1" height="1"/><rect x="90" y="11" width="1" height="1"/><rect x="90" y="13" width="1" height="1"/><rect x="90" y="15" width="1" height="1"/><rect x="90" y="17" width="1" height="1"/><rect x="92" y="5" width="1" height="1"/><rect x="92" y="7" width="1" height="1"/><rect x="92" y="9" width="1" height="1"/><rect x="92" y="11" width="1" height="1"/><rect x="92" y="13" width="1" height="1"/><rect x="92" y="15" width="1" height="1"/><rect x="92" y="17" width="1" height="1"/><rect x="94" y="5" width="1" height="1"/><rect x="94" y="7" width="1" height="1"/><rect x="94" y="9" width="1" height="1"/><rect x="94" y="11" width="1" height="1"/><rect x="94" y="13" width="1" height="1"/><rect x="94" y="15" width="1" height="1"/><rect x="94" y="17" width="1" height="1"/><rect x="96" y="5" width="1" height="1"/><rect x="96" y="7" width="1" height="1"/><rect x="96" y="9" width="1" height="1"/><rect x="96" y="11" width="1" height="1"/><rect x="96" y="13" width="1" height="1"/><rect x="96" y="15" width="1" height="1"/><rect x="96" y="17" width="1" height="1"/><rect x="98" y="5" width="1" height="1"/><rect x="98" y="7" width="1" height="1"/><rect x="98" y="9" width="1" height="1"/><rect x="98" y="11" width="1" height="1"/><rect x="98" y="13" width="1" height="1"/><rect x="98" y="15" width="1" height="1"/><rect x="98" y="17" width="1" height="1"/><rect x="100" y="5" width="1" height="1"/><rect x="100" y="7" width="1" height="1"/><rect x="100" y="9" width="1" height="1"/><rect x="100" y="11" width="1" height="1"/><rect x="100" y="13" width="1" height="1"/><rect x="100" y="15" width="1" height="1"/><rect x="100" y="17" width="1" height="1"/><rect x="102" y="5" width="1" height="1"/><rect x="102" y="7" width="1" height="1"/><rect x="102" y="9" width="1" height="1"/><rect x="102" y="11" width="1" height="1"/><rect x="102" y="13" width="1" height="1"/><rect x="102" y="15" width="1" height="1"/><rect x="102" y="17" width="1" height="1"/><rect x="104" y="5" width="1" height="1"/><rect x="104" y="7" width="1" height="1"/><rect x="104" y="9" width="1" height="1"/><rect x="104" y="11" width="1" height="1"/><rect x="104" y="13" width="1" height="1"/><rect x="104" y="15" width="1" height="1"/><rect x="104" y="17" width="1" height="1"/></g><g fill="#f2f200"><rect x="4" y="5" width="1" height="1"/><rect x="6" y="5" width="1" height="1"/><rect x="8" y="5" width="1" height="1"/><rect x="2" y="7" width="1" height="1"/><rect x="10" y="7" width="1" height="1"/><rect x="2" y="9" width="1" height="1"/><rect x="8" y="9" width="1" height="1"/><rect x="10" y="9" width="1" height="1"/><rect x="2" y="11" width="1" height="1"/><rect x="6" y="11" width="1" height="1"/><rect x="10" y="11" width="1" height="1"/><rect x="2" y="13" width="1" height="1"/><rect x="4" y="13" width="1" height="1"/><rect x="10" y="13" width="1" height="1"/><rect x="2" y="15" width="1" height="1"/><rect x="10" y="15" width="1" height="1"/><rect x="4" y="17" width="1" height="1"/><rect x="6" y="17" width="1" height="1"/><rect x="8" y="17" width="1" height="1"/><rect x="16" y="5" width="1" height="1"/><rect x="18" y="5" width="1" height="1"/><rect x="20" y="5" width="1" height="1"/><rect x="14" y="7" width="1" height="1"/><rect x="22" y="7" width="1" height="1"/><rect x="14" y="9" width="1" height="1"/><rect x="20" y="9" width="1" height="1"/><rect x="22" y="9" width="1" height="1"/><rect x="14" y="11" width="1" height="1"/><rect x="18" y="11" width="1" height="1"/><rect x="22" y="11" width="1" height="1"/><rect x="14" y="13" width="1" height="1"/><rect x="16" y="13" width="1" height="1"/><rect x="22" y="13" width="1" height="1"/><rect x="14" y="15" width="1" height="1"/><rect x="22" y="15" width="1" height="1"/><rect x="16" y="17" width="1" height="1"/><rect x="18" y="17" width="1" height="1"/><rect x="20" y="17" width="1" height="1"/><rect x="40" y="5" width="1" height="1"/><rect x="42" y="5" width="1" height="1"/><rect x="44" y="5" width="1" height="1"/><rect x="38" y="7" width="1" height="1"/><rect x="46" y="7" width="1" height="1"/><rect x="38" y="9" width="1" height="1"/><rect x="44" y="9" width="1" height="1"/><rect x="46" y="9" width="1" height="1"/><rect x="38" y="11" width="1" height="1"/><rect x="42" y="11" width="1" height="1"/><rect x="46" y="11" width="1" height="1"/><rect x="38" y="13" width="1" height="1"/><rect x="40" y="13" width="1" height="1"/><rect x="46" y="13" width="1" height="1"/><rect x="38" y="15" width="1" height="1"/><rect x="46" y="15" width="1" height="1"/><rect x="40" y="17" width="1" height="1"/><rect x="42" y="17" width="1" height="1"/><rect x="44" y="17" width="1" height="1"/><rect x="52" y="5" width="1" height="1"/><rect x="54" y="5" width="1" height="1"/><rect x="56" y="5" width="1" height="1"/><rect x="50" y="7" width="1" height="1"/><rect x="58" y="7" width="1" height="1"/><rect x="50" y="9" width="1" height="1"/><rect x="56" y="9" width="1" height="1"/><rect x="58" y="9" width="1" height="1"/><rect x="50" y="11" width="1" height="1"/><rect x="54" y="11" width="1" height="1"/><rect x="58" y="11" width="1" height="1"/><rect x="50" y="13" width="1" height="1"/><rect x="52" y="13" width="1" height="1"/><rect x="58" y="13" width="1" height="1"/><rect x="50" y="15" width="1" height="1"/><rect x="58" y="15" width="1" height="1"/><rect x="52" y="17" width="1" height="1"/><rect x="54" y="17" width="1" height="1"/><rect x="56" y="17" width="1" height="1"/><rect x="76" y="5" width="1" height="1"/><rect x="78" y="5" width="1" height="1"/><rect x="80" y="5" width="1" height="1"/><rect x="74" y="7" width="1" height="1"/><rect x="82" y="7" width="1" height="1"/><rect x="74" y="9" width="1" height="1"/><rect x="80" y="9" width="1" height="1"/><rect x="82" y="9" width="1" height="1"/><rect x="74" y="11" width="1" height="1"/><rect x="78" y="11" width="1" height="1"/><rect x="82" y="11" width="1" height="1"/><rect x="74" y="13" width="1" height="1"/><rect x="76" y="13" width="1" height="1"/><rect x="82" y="13" width="1" height="1"/><rect x="74" y="15" width="1" height="1"/><rect x="82" y="15" width="1" height="1"/><rect x="76" y="17" width="1" height="1"/><rect x="78" y="17" width="1" height="1"/><rect x="80" y="17" width="1" height="1"/><rect x="88" y="5" width="1" height="1"/><rect x="90" y="5" width="1" height="1"/><rect x="92" y="5" width="1" height="1"/><rect x="86" y="7" width="1" height="1"/><rect x="94" y="7" width="1" height="1"/><rect x="86" y="9" width="1" height="1"/><rect x="92" y="9" width="1" height="1"/><rect x="94" y="9" width="1" height="1"/><rect x="86" y="11" width="1" height="1"/><rect x="90" y="11" width="1" height="1"/><rect x="94" y="11" width="1" height="1"/><rect x="86" y="13" width="1" height="1"/><rect x="88" y="13" width="1" height="1"/><rect x="94" y="13" width="1" height="1"/><rect x="86" y="15" width="1" height="1"/><rect x="94" y="15" width="1" height="1"/><rect x="88" y="17" width="1" height="1"/><rect x="90" y="17" width="1" height="1"/><rect x="92" y="17" width="1" height="1"/><rect x="30" y="9" width="1" height="1"/><rect x="30" y="15" width="1" height="1"/><rect x="66" y="9" width="1" height="1"/><rect x="66" y="15" width="1" height="1"/></g></svg>
<div class="a" style="left:391px;top:505px;width:290px;height:1px;background:#fff"></div>

<!-- far right panel -->
<div class="a" style="left:687px;top:121px;width:67px;height:385px;background:#ababab;border-top:2px solid #808080"></div>
<div class="a" style="left:697px;top:133px;width:12px;height:12px;border-radius:50%;background:#fff"></div>
<div class="a" style="left:700px;top:136px;width:6px;height:6px;border-radius:50%;background:#c8c8c8"></div>
<div class="t" style="left:714px;top:134px;color:#858585">API</div>
<div class="a" style="left:697px;top:155px;width:12px;height:12px;border-radius:50%;background:#fff"></div>
<div class="t" style="left:714px;top:156px;color:#858585">PIO</div>
<div class="a" style="left:694px;top:183px;width:19px;height:10px;background:#808080;border:1px solid #000"></div>
<div class="a" style="left:694px;top:214px;width:55px;height:21px;background:#e1e1e1"></div>
<div class="t" style="left:705px;top:219px">Sleep</div>
<div class="a" style="left:694px;top:276px;width:55px;height:21px;background:#e1e1e1"></div>
<div class="t" style="left:704px;top:281px">Recall</div>
<div class="a" style="left:692px;top:391px;width:27px;height:12px;background:#a4a4a4;border:1.5px solid #303030"></div>
<div class="t" style="left:697px;top:393px;font-size:10px;line-height:9px;font-weight:bold;color:#bebebe">WR</div>
<div class="a" style="left:724px;top:391px;width:27px;height:12px;background:#a4a4a4;border:1.5px solid #303030"></div>
<div class="t" style="left:730px;top:393px;font-size:10px;line-height:9px;font-weight:bold;color:#bebebe">RD</div>
<div class="a" style="left:694px;top:461px;width:55px;height:21px;background:#e1e1e1"></div>
<div class="t" style="left:705px;top:466px">Passp</div>

<!-- dropdown list -->
<div class="a" style="left:611px;top:246px;width:68px;height:178px;background:#f0f0f0;border:1px solid #0078d7;box-shadow:2px 2px 2px rgba(0,0,0,0.35)"></div>
<div class="t" style="left:614px;top:249px;font-size:12.5px;line-height:12px">never</div>
<div class="t" style="left:614px;top:265px;font-size:12.5px;line-height:12px">10</div>
<div class="t" style="left:614px;top:281px;font-size:12.5px;line-height:12px">20</div>
<div class="t" style="left:614px;top:297px;font-size:12.5px;line-height:12px">50</div>
<div class="t" style="left:614px;top:313px;font-size:12.5px;line-height:12px">100</div>
<div class="t" style="left:614px;top:329px;font-size:12.5px;line-height:12px">250</div>
<div class="t" style="left:614px;top:345px;font-size:12.5px;line-height:12px">500</div>
<div class="a" style="left:612px;top:359px;width:66px;height:16px;background:#0078d7"></div>
<div class="t" style="left:614px;top:361px;font-size:12.5px;line-height:12px;color:#fff">1000</div>
<div class="t" style="left:614px;top:377px;font-size:12.5px;line-height:12px">10000</div>
<div class="t" style="left:614px;top:393px;font-size:12.5px;line-height:12px">30000</div>
<div class="t" style="left:614px;top:409px;font-size:12.5px;line-height:12px">never</div>

<!-- log area -->
<div class="a" style="left:0;top:506px;width:754px;height:6px;background:#f0f0f0"></div>
<div class="a" style="left:0;top:512px;width:684px;height:67px;background:#f3fff3;border-top:1px solid #7c7c7c"></div>
<div class="a" style="left:69px;top:513px;width:1px;height:66px;background:#e4f2e4"></div>
<div class="a" style="left:0;top:534px;width:667px;height:1px;background:#e4f2e4"></div>
<div class="a" style="left:0;top:554px;width:667px;height:1px;background:#e4f2e4"></div>
<div class="a" style="left:0;top:573px;width:667px;height:1px;background:#e4f2e4"></div>
<div class="t" style="left:8px;top:519px;letter-spacing:0.5px">16:37:53</div>
<div class="t" style="left:8px;top:538px;letter-spacing:0.5px">16:38:29</div>
<div class="t" style="left:8px;top:558px;letter-spacing:0.5px">16:38:29</div>
<div class="t" style="left:75.5px;top:519px;letter-spacing:0.235px">Model: WDC WD10EZEX-08M2NA0; Capacity: 1953525168 LBAs; SN: WD-WCC3FDEJ48XC; FW: 01....</div>
<div class="t" style="left:75.5px;top:538px;letter-spacing:0.27px">Get drive passport... OK</div>
<div class="t" style="left:75.5px;top:558px;letter-spacing:0.17px;color:#0000ee">Model: KINGSTON SNVS250G; Capacity: 251662328 LBAs</div>
<div class="a" style="left:667px;top:513px;width:16px;height:66px;background:#f0f0f0"></div>
<div class="a" style="left:667px;top:548px;width:15px;height:17px;background:#cdcdcd"></div>
<svg class="a" style="left:667px;top:516px" width="16" height="14"><path d="M4 9.5L8 5.5L12 9.5" fill="none" stroke="#505050" stroke-width="1.8"/></svg>
<svg class="a" style="left:667px;top:566px" width="16" height="13"><path d="M4 5L8 9L12 5" fill="none" stroke="#505050" stroke-width="1.8"/></svg>
<div class="a" style="left:683px;top:512px;width:71px;height:67px;background:#ababab;border-left:1px solid #d0d0d0"></div>
<div class="a" style="left:694px;top:521px;width:13px;height:13px;background:#fff;border:1px solid #333"></div>
<svg class="a" style="left:694px;top:521px" width="13" height="13"><path d="M2.5 6.5L5.2 9.2L10.5 3" fill="none" stroke="#222" stroke-width="1.3"/></svg>
<div class="t" style="left:712px;top:522px">Sound</div>
<div class="a" style="left:694px;top:544px;width:13px;height:13px;background:#fff;border:1px solid #333"></div>
<div class="t" style="left:712px;top:545px">Hints</div>
</body></html>
